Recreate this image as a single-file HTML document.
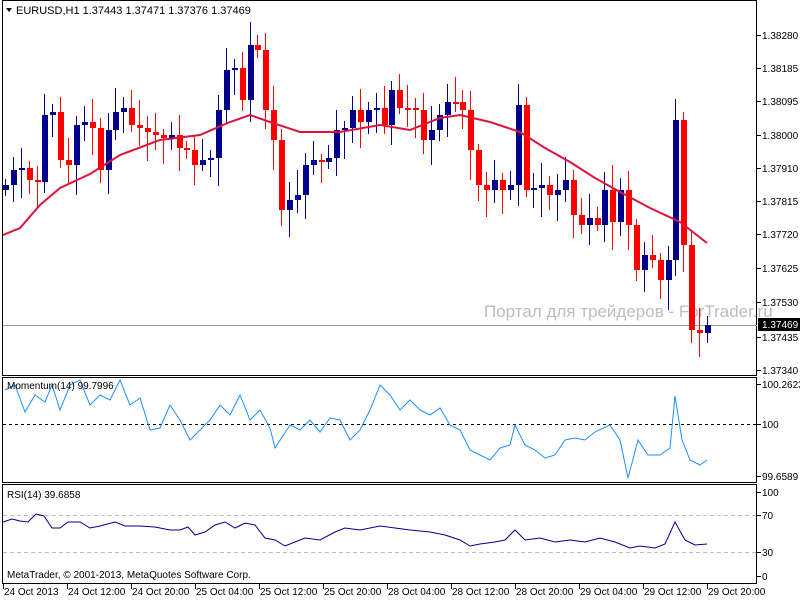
<!DOCTYPE html>
<html><head><meta charset="utf-8"><style>
body{margin:0;background:#fff;width:800px;height:600px;overflow:hidden;font-family:"Liberation Sans",sans-serif}
svg text{font-family:"Liberation Sans",sans-serif;font-size:10px;fill:#000}
</style></head><body>
<svg id="s" width="800" height="600" xmlns="http://www.w3.org/2000/svg">
<rect width="800" height="600" fill="#fff"/>
<rect x="2.5" y="0.5" width="754" height="375" fill="none" stroke="#000"/>
<rect x="2.5" y="377.5" width="754" height="105" fill="none" stroke="#000"/>
<rect x="2.5" y="484.5" width="754" height="99" fill="none" stroke="#000"/>
<line x1="3" y1="325.5" x2="757" y2="325.5" stroke="#999"/>
<text x="484" y="317" style="font-size:17px;fill:#bdbdbd">Портал для трейдеров - ForTrader.ru</text>
<g id="c"></g>
<polyline fill="none" stroke="#dc143c" stroke-width="2" points="3,235 20,228 40,205 60,188 90,174 120,155 160,140 200,135 230,122 250,115 270,122 300,132 340,132 380,125 410,130 440,118 460,115 490,122 520,132 545,148 570,162 595,178 620,192 650,208 680,222 707,243"/>
<rect x="3" y="1" width="230" height="18" fill="#fff"/>
<polygon points="6,8 12,8 9,12" fill="#000"/>
<text x="16" y="14" style="font-size:11px">EURUSD,H1  1.37443 1.37471 1.37376 1.37469</text>
<line x1="3" y1="424.5" x2="757" y2="424.5" stroke="#000" stroke-dasharray="3,3"/>
<polyline fill="none" stroke="#1e90ff" points="5,390 15,385 25,412 35,395 45,402 52,385 60,410 70,385 80,380 90,405 100,395 110,400 120,380 130,405 140,398 150,430 160,428 170,405 180,420 190,440 200,430 210,420 220,405 230,415 240,395 250,420 260,410 270,428 275,448 290,425 300,430 310,420 320,432 330,418 340,420 350,440 360,430 370,410 380,385 390,395 400,410 410,400 420,410 430,415 440,408 450,425 460,430 470,450 480,455 490,460 500,448 510,445 515,425 525,445 535,450 545,458 555,455 565,440 575,438 585,440 595,432 610,425 620,440 628,478 638,440 648,455 660,455 670,448 675,396 682,440 690,460 700,465 707,460"/>
<text x="7" y="389">Momentum(14) 99.7996</text>
<line x1="3" y1="515.5" x2="757" y2="515.5" stroke="#bbb" stroke-dasharray="4,3"/>
<line x1="3" y1="552.5" x2="757" y2="552.5" stroke="#bbb" stroke-dasharray="4,3"/>
<polyline fill="none" stroke="#00008b" points="3,522 12,519 20,521 28,522 36,514 44,516 52,528 60,528 68,522 80,522 90,528 100,526 115,522 125,526 140,526 155,527 170,530 180,530 188,527 195,535 205,532 215,525 225,522 235,528 245,523 255,525 265,538 275,540 285,546 295,542 305,538 320,540 335,532 345,528 360,530 380,526 395,528 410,530 430,532 445,535 460,540 470,546 480,544 495,542 505,540 515,530 525,540 540,538 555,542 570,540 585,542 600,538 615,542 630,548 640,546 655,548 665,544 675,522 685,540 695,545 707,544"/>
<text x="7" y="498">RSI(14) 39.6858</text>
<text x="7" y="578">MetaTrader, © 2001-2013, MetaQuotes Software Corp.</text>
<g id="ax"></g>
<rect x="758" y="318" width="42" height="13" fill="#000"/>
<text x="762" y="328" style="fill:#fff">1.37469</text>
</svg>
<script>
(function(){
var NS="http://www.w3.org/2000/svg",g=document.getElementById('c'),ax=document.getElementById('ax');
function el(p,t,a,txt){var e=document.createElementNS(NS,t);for(var k in a)e.setAttribute(k,a[k]);if(txt)e.textContent=txt;p.appendChild(e);return e;}
var c=[185,170,168,180,182,115,112,160,165,125,122,128,170,130,112,108,125,128,132,135,138,135,148,150,165,160,158,110,70,68,100,45,50,110,140,210,200,195,165,160,162,158,130,128,110,122,110,108,125,90,108,108,110,140,130,115,102,102,110,150,185,190,180,190,185,105,190,188,185,195,190,180,215,225,218,225,190,222,190,225,270,255,260,280,260,120,245,330,333,325];
var prev=190,n=c.length,sp=(707-5)/(n-1);
for(var i=0;i<n;i++){var x=Math.round(5+sp*i),o=prev,cl=c[i];var tp=Math.min(o,cl),bt=Math.max(o,cl);if(bt-tp<2)bt=tp+2;
var up=cl<o,col=up?'#00008b':'#ff0000';var hi=tp-6-((i*7)%20),lo=bt+6+((i*11)%25);
el(g,'line',{x1:x+.5,x2:x+.5,y1:hi,y2:lo,stroke:col});el(g,'rect',{x:x-2,y:tp,width:6,height:bt-tp,fill:col});prev=cl;}
var pl=[["1.38280",35],["1.38185",68],["1.38095",101],["1.38000",135],["1.37910",168],["1.37815",201],["1.37720",234],["1.37625",268],["1.37530",302],["1.37435",337],["1.37340",370],["100.2623",384],["100",424],["99.6589",476],["100",492],["70",515],["30",552],["0",576]];
pl.forEach(function(p){el(ax,'line',{x1:757,x2:761,y1:p[1]+.5,y2:p[1]+.5,stroke:'#000'});el(ax,'text',{x:762,y:p[1]+4},p[0]);});
var tl=["24 Oct 2013","24 Oct 12:00","24 Oct 20:00","25 Oct 04:00","25 Oct 12:00","25 Oct 20:00","28 Oct 04:00","28 Oct 12:00","28 Oct 20:00","29 Oct 04:00","29 Oct 12:00","29 Oct 20:00"];
tl.forEach(function(t,i){var x=3+64*i;el(ax,'line',{x1:x+.5,x2:x+.5,y1:584,y2:589,stroke:'#000'});el(ax,'text',{x:x+1,y:595},t);});
})();
</script>
</body></html>
